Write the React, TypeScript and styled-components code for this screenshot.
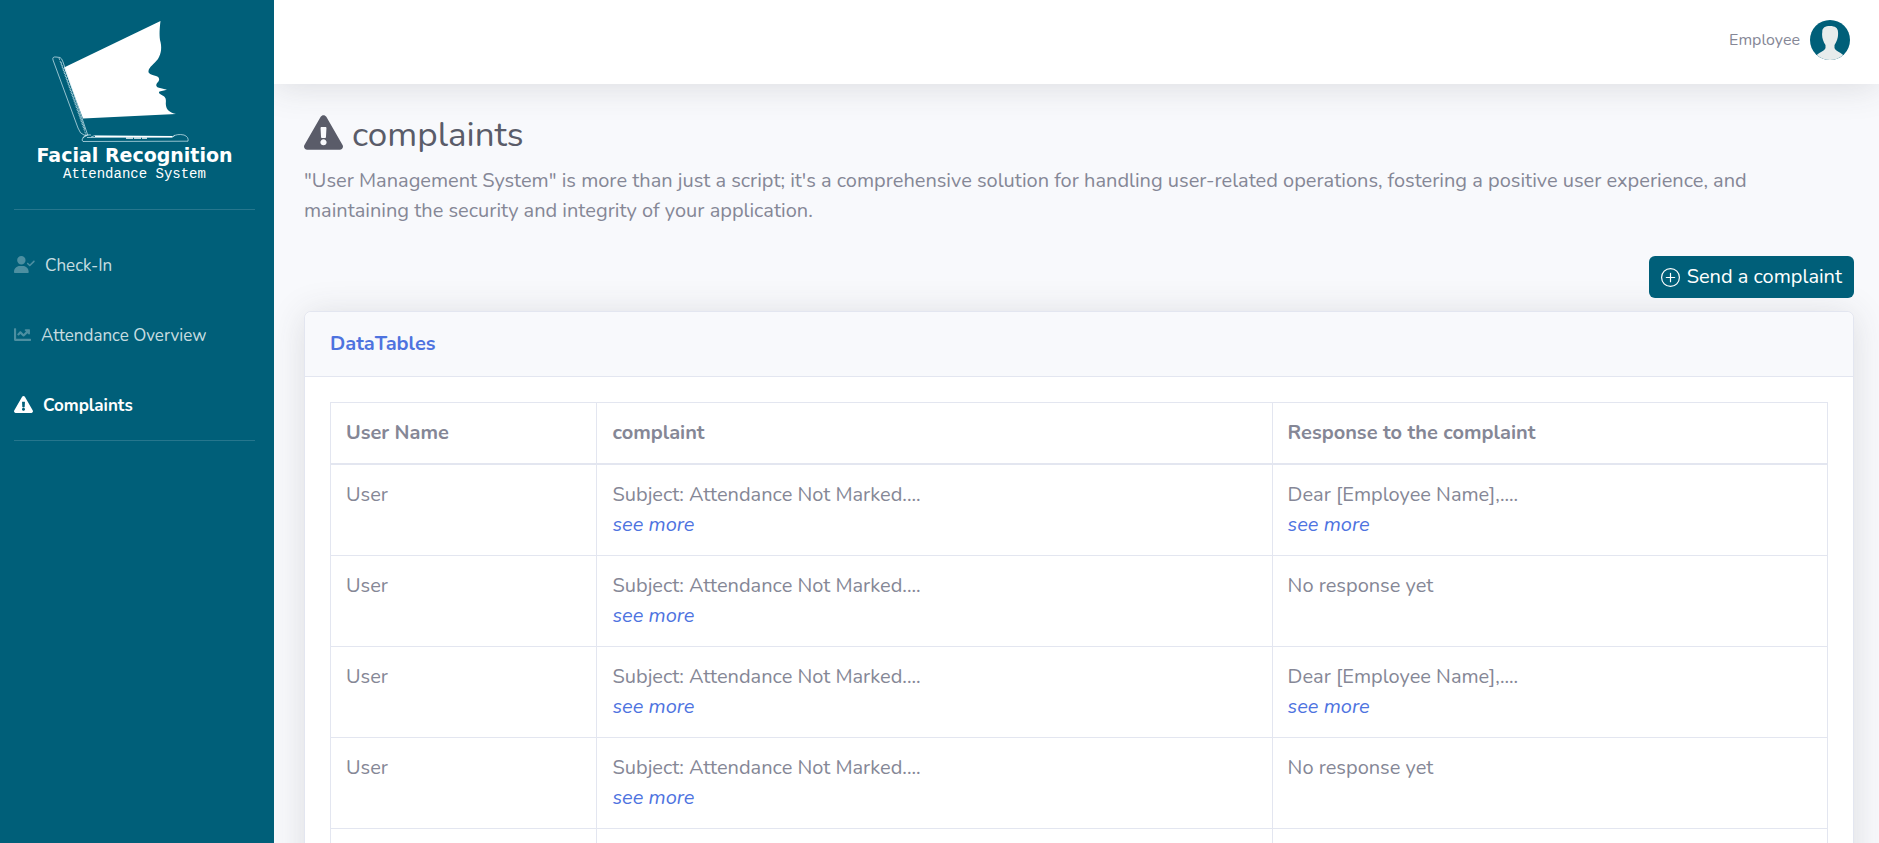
import React from "react";
import styled, { createGlobalStyle } from "styled-components";
import { FaChartLine, FaExclamationTriangle } from "react-icons/fa";
import { FaUserCheck } from "react-icons/fa6";
import { BsPlusCircle } from "react-icons/bs";

const GlobalStyle = createGlobalStyle`
  *, *::before, *::after { box-sizing: border-box; }
  body {
    margin: 0;
    background: #f8f9fc;
    color: #858796;
    font-family: Nunito, Lato, sans-serif;
    font-size: 20px;
    line-height: 30px;
  }
`;

const Page = styled.div`
  display: flex;
  min-height: 100vh;
`;

const Sidebar = styled.aside`
  position: relative;
  z-index: 1;
  flex: 0 0 274px;
  padding: 0 19px 0 14px;
  background: #005f79;
  color: #fff;
`;

const Brand = styled.a`
  display: flex;
  flex-direction: column;
  align-items: center;
  height: 209px;
  padding-top: 16px;
  color: #fff;
  text-decoration: none;
`;

const BrandMark = styled.svg`
  width: 180px;
  height: 128px;
`;

const BrandTitle = styled.span`
  font: bold 19px/22px "DejaVu Sans", sans-serif;
  white-space: nowrap;
`;

const BrandSubtitle = styled.span`
  font: 14px/16px "Liberation Mono", monospace;
`;

const Divider = styled.hr`
  margin: 0;
  border: 0;
  border-top: 1px solid rgba(255, 255, 255, 0.15);
`;

const NavList = styled.ul`
  margin: 0;
  padding: 20px 0 0;
  list-style: none;
`;

const NavLink = styled.a<{ $active?: boolean; $iconWidth: number }>`
  display: block;
  padding-top: 2px;
  color: ${(p) => (p.$active ? "#fff" : "rgba(255, 255, 255, 0.8)")};
  font-size: 17px;
  line-height: 68px;
  font-weight: ${(p) => (p.$active ? 700 : 400)};
  text-decoration: none;

  svg {
    width: ${(p) => p.$iconWidth}px;
    height: 17px;
    margin-right: 10px;
    vertical-align: -2px;
    color: ${(p) => (p.$active ? "#fff" : "rgba(255, 255, 255, 0.3)")};
  }
`;

const Content = styled.div`
  flex: 1;
  min-width: 0;
`;

const Topbar = styled.header`
  display: flex;
  justify-content: flex-end;
  align-items: flex-start;
  height: 84px;
  padding: 20px 29px 0;
  background: #fff;
  box-shadow: 0 3px 35px rgba(58, 59, 69, 0.15);
`;

const Account = styled.button`
  display: flex;
  align-items: center;
  gap: 10px;
  padding: 0;
  border: 0;
  background: none;
  color: #858796;
  font: inherit;
  font-size: 16px;
`;

const Main = styled.main`
  padding: 30px 25px 30px 30px;
`;

const Title = styled.h1`
  margin: 0 0 10px;
  color: #5a5c69;
  font-size: 35px;
  font-weight: 400;
  line-height: 42px;

  svg {
    width: 39px;
    height: 35px;
    margin-right: 9px;
    vertical-align: -4px;
  }
`;

const Intro = styled.p`
  margin: 0 0 30px;
`;

const Actions = styled.div`
  display: flex;
  justify-content: flex-end;
  margin-bottom: 13px;
`;

const PrimaryButton = styled.button`
  display: flex;
  align-items: center;
  gap: 7px;
  height: 42px;
  padding: 0 12px;
  border: 0;
  border-radius: 6px;
  background: #005f79;
  color: #fff;
  font: inherit;
`;

const Card = styled.section`
  border: 1px solid #e3e6f0;
  border-radius: 7px;
  background: #fff;
  box-shadow: 0 3px 35px rgba(58, 59, 69, 0.15);
`;

const CardHeader = styled.div`
  padding: 20px 25px;
  border-bottom: 1px solid #e3e6f0;
  border-radius: 7px 7px 0 0;
  background: #f8f9fc;
`;

const CardTitle = styled.h2`
  margin: 0;
  color: #4e73df;
  font-size: 20px;
  font-weight: 700;
  line-height: 24px;
`;

const CardBody = styled.div`
  padding: 25px;
`;

const Table = styled.table`
  width: 100%;
  border-collapse: collapse;
  table-layout: fixed;
`;

const Column = styled.col<{ $share: number }>`
  width: ${(p) => p.$share}%;
`;

const HeadCell = styled.th`
  padding: 15px;
  border: 1px solid #e3e6f0;
  border-bottom-width: 2px;
  text-align: left;
  font-weight: 700;
`;

const Cell = styled.td`
  padding: 15px;
  border: 1px solid #e3e6f0;
  vertical-align: top;
`;

const MoreLink = styled.a`
  display: block;
  color: #4e73df;
  font-style: italic;
  text-decoration: none;
`;

const Logo = () => (
  <BrandMark viewBox="30 16 180 128" aria-hidden="true">
    <g transform="translate(-14 0)">
      <path
        fill="#fff"
        d="M63 67.500L159.500 21C158.500 29 158.300 34 159 40C161 47 160.500 53 157 59C153 64 148 67 147.500 71C147 73.500 150 74.500 155 76C158.500 77 159 80 157 82C155 84 154.500 86 157 87.500L166 89.800L158.500 91.500C157 92.500 158.500 94 162.500 96C165.500 98 165 101 164.800 104C165 110 169 112.500 175 114L82 118.500Z"
      />
      <g fill="none" stroke="#d5edf3" strokeWidth="0.700">
        <path d="M52 60Q51 56.500 55 57L59 57.500Q61 58.500 62 62L87 136" />
        <path d="M52 60L77 128Q79 134 83 135L86 135.500Q81 137 81 140L82 141.500L187 141.200Q188 137 183 135Q176 133.500 172 136.500L94 135.500L90 137" />
        <path d="M58 58L85 135M60 62L84 130" strokeDasharray="2 1" />
        <path d="M86 137.500H171L174 135M82 138Q84 134 90 135" />
      </g>
      <path stroke="#fff" strokeWidth="1" d="M94 136.500H171" />
      <path stroke="#fff" strokeWidth="1.200" strokeDasharray="7 1" d="M125 138.200H146" />
    </g>
  </BrandMark>
);

const Avatar = () => (
  <svg width="40" height="40" viewBox="0 0 40 40" aria-hidden="true">
    <circle cx="20" cy="20" r="20" fill="#005f79" />
    <path
      fill="#e7ecec"
      d="M12.300 12C12 8 15 6 20 6S28 8 28 12C28.500 17 27 21 24.500 25V28C25.500 31 30 32 33.200 35A20 20 0 0 1 6.800 35C10 32 14.500 31 15.500 28V25C13 21 11.500 17 12.300 12Z"
    />
  </svg>
);

const subject = "Subject: Attendance Not Marked....";
const reply = "Dear [Employee Name],....";
const rows = [
  { user: "User", complaint: subject, response: reply },
  { user: "User", complaint: subject },
  { user: "User", complaint: subject, response: reply },
  { user: "User", complaint: subject },
  { user: "User", complaint: subject, response: reply },
];

export default function App() {
  return (
    <Page>
      <GlobalStyle />
      <Sidebar>
        <Brand href="#">
          <Logo />
          <BrandTitle>Facial Recognition</BrandTitle>
          <BrandSubtitle>Attendance System</BrandSubtitle>
        </Brand>
        <Divider />
        <nav>
          <NavList>
            <li>
              <NavLink href="#check-in" $iconWidth={21}>
                <FaUserCheck />
                Check-In
              </NavLink>
            </li>
            <li>
              <NavLink href="#attendance" $iconWidth={17}>
                <FaChartLine />
                Attendance Overview
              </NavLink>
            </li>
            <li>
              <NavLink href="#complaints" $iconWidth={19} $active aria-current="page">
                <FaExclamationTriangle />
                Complaints
              </NavLink>
            </li>
          </NavList>
        </nav>
        <Divider />
      </Sidebar>
      <Content>
        <Topbar>
          <Account type="button">
            Employee
            <Avatar />
          </Account>
        </Topbar>
        <Main>
          <Title>
            <FaExclamationTriangle />
            complaints
          </Title>
          <Intro>
            "User Management System" is more than just a script; it's a comprehensive solution for handling
            user-related operations, fostering a positive user experience, and maintaining the security and
            integrity of your application.
          </Intro>
          <Actions>
            <PrimaryButton type="button">
              <BsPlusCircle size={19} />
              Send a complaint
            </PrimaryButton>
          </Actions>
          <Card>
            <CardHeader>
              <CardTitle>DataTables</CardTitle>
            </CardHeader>
            <CardBody>
              <Table>
                <colgroup>
                  <Column $share={17.8} />
                  <Column $share={45.1} />
                  <Column $share={37.1} />
                </colgroup>
                <thead>
                  <tr>
                    <HeadCell scope="col">User Name</HeadCell>
                    <HeadCell scope="col">complaint</HeadCell>
                    <HeadCell scope="col">Response to the complaint</HeadCell>
                  </tr>
                </thead>
                <tbody>
                  {rows.map((row, i) => (
                    <tr key={i}>
                      <Cell>{row.user}</Cell>
                      <Cell>
                        {row.complaint}
                        <MoreLink href="#more">see more</MoreLink>
                      </Cell>
                      <Cell>
                        {row.response ?? "No response yet"}
                        {row.response && <MoreLink href="#more">see more</MoreLink>}
                      </Cell>
                    </tr>
                  ))}
                </tbody>
              </Table>
            </CardBody>
          </Card>
        </Main>
      </Content>
    </Page>
  );
}
